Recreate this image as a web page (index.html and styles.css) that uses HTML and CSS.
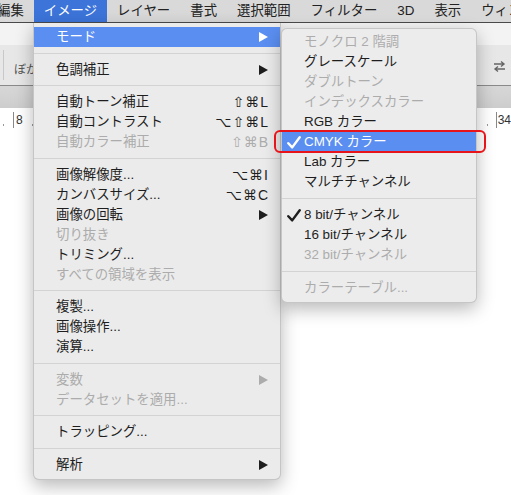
FILE: index.html
```html
<!DOCTYPE html>
<html lang="ja">
<head>
<meta charset="utf-8">
<title>Photoshop イメージメニュー</title>
<link rel="stylesheet" href="styles.css">
</head>
<body>
<div class="app">
  <div class="menubar">
    <span class="mb-item">編集</span>
    <span class="mb-item active">イメージ</span>
    <span class="mb-item">レイヤー</span>
    <span class="mb-item">書式</span>
    <span class="mb-item">選択範囲</span>
    <span class="mb-item">フィルター</span>
    <span class="mb-item">3D</span>
    <span class="mb-item">表示</span>
    <span class="mb-item">ウィンドウ</span>
  </div>
  <div class="opt-top"></div>
  <div class="opt-main">
    <span class="vsep"></span>
    <span class="opt-label">ぼかし</span>
    <span class="grow"></span>
    <svg class="swap" width="13" height="13" viewBox="0 0 13 13"><path d="M1 4H11M8 1.5L11 4L8 6.5M12 9H2M5 6.5L2 9L5 11.5" fill="none" stroke="currentColor" stroke-width="1.4"/></svg>
  </div>
  <div class="opt-line"></div>
  <div class="tabband"></div>
  <div class="ruler">
    <div class="rgroup"><span class="dot"></span><span class="tick"></span><span class="num">8</span><span class="dot dot-after"></span></div>
    <div class="rgroup"><span class="dot"></span><span class="tick"></span><span class="num">34</span></div>
  </div>
</div>

<div class="menu main-menu">
  <div class="item hl"><span class="label">モード</span><svg class="arrow" width="9" height="10" viewBox="0 0 9 10"><path d="M0 0L9 5L0 10Z" fill="currentColor"/></svg></div>
  <div class="sep"></div>
  <div class="item"><span class="label">色調補正</span><svg class="arrow" width="9" height="10" viewBox="0 0 9 10"><path d="M0 0L9 5L0 10Z" fill="currentColor"/></svg></div>
  <div class="sep"></div>
  <div class="item"><span class="label">自動トーン補正</span><span class="key">⇧⌘L</span></div>
  <div class="item"><span class="label">自動コントラスト</span><span class="key">⌥⇧⌘L</span></div>
  <div class="item dis"><span class="label">自動カラー補正</span><span class="key">⇧⌘B</span></div>
  <div class="sep"></div>
  <div class="item"><span class="label">画像解像度...</span><span class="key">⌥⌘I</span></div>
  <div class="item"><span class="label">カンバスサイズ...</span><span class="key">⌥⌘C</span></div>
  <div class="item"><span class="label">画像の回転</span><svg class="arrow" width="9" height="10" viewBox="0 0 9 10"><path d="M0 0L9 5L0 10Z" fill="currentColor"/></svg></div>
  <div class="item dis"><span class="label">切り抜き</span></div>
  <div class="item"><span class="label">トリミング...</span></div>
  <div class="item dis"><span class="label">すべての領域を表示</span></div>
  <div class="sep"></div>
  <div class="item"><span class="label">複製...</span></div>
  <div class="item"><span class="label">画像操作...</span></div>
  <div class="item"><span class="label">演算...</span></div>
  <div class="sep"></div>
  <div class="item dis"><span class="label">変数</span><svg class="arrow" width="9" height="10" viewBox="0 0 9 10"><path d="M0 0L9 5L0 10Z" fill="currentColor"/></svg></div>
  <div class="item dis"><span class="label">データセットを適用...</span></div>
  <div class="sep"></div>
  <div class="item"><span class="label">トラッピング...</span></div>
  <div class="sep"></div>
  <div class="item"><span class="label">解析</span><svg class="arrow" width="9" height="10" viewBox="0 0 9 10"><path d="M0 0L9 5L0 10Z" fill="currentColor"/></svg></div>
</div>

<div class="menu sub-menu">
  <div class="sitem dis"><span class="chk"></span><span class="label">モノクロ 2 階調</span></div>
  <div class="sitem"><span class="chk"></span><span class="label">グレースケール</span></div>
  <div class="sitem dis"><span class="chk"></span><span class="label">ダブルトーン</span></div>
  <div class="sitem dis"><span class="chk"></span><span class="label">インデックスカラー</span></div>
  <div class="sitem"><span class="chk"></span><span class="label">RGB カラー</span></div>
  <div class="sitem hl"><span class="chk"><svg width="14" height="13" viewBox="0 0 14 13"><path d="M1.3 7.2L5.2 11.4L12.7 1.3" fill="none" stroke="currentColor" stroke-width="2.4" stroke-linecap="round" stroke-linejoin="round"/></svg></span><span class="label">CMYK カラー</span></div>
  <div class="sitem"><span class="chk"></span><span class="label">Lab カラー</span></div>
  <div class="sitem"><span class="chk"></span><span class="label">マルチチャンネル</span></div>
  <div class="sep"></div>
  <div class="sitem"><span class="chk"><svg width="14" height="13" viewBox="0 0 14 13"><path d="M1.3 7.2L5.2 11.4L12.7 1.3" fill="none" stroke="currentColor" stroke-width="2.4" stroke-linecap="round" stroke-linejoin="round"/></svg></span><span class="label">8 bit/チャンネル</span></div>
  <div class="sitem"><span class="chk"></span><span class="label">16 bit/チャンネル</span></div>
  <div class="sitem dis"><span class="chk"></span><span class="label">32 bit/チャンネル</span></div>
  <div class="sep"></div>
  <div class="sitem dis"><span class="chk"></span><span class="label">カラーテーブル...</span></div>
</div>

<div class="callout"></div>
</body>
</html>
```

FILE: styles.css
```css
html, body {
  margin: 0;
  padding: 0;
}
body {
  width: 511px;
  height: 495px;
  overflow: hidden;
  position: relative;
  background: #ffffff;
  font-family: "Liberation Sans", "Noto Sans CJK JP", sans-serif;
  color: #1e1e1e;
}

/* ---------- background application ---------- */
.app {
  width: 511px;
}
.menubar {
  height: 22px;
  background: #d9d9d9;
  border-bottom: 1px solid #4a4a4a;
  display: flex;
  align-items: center;
  white-space: nowrap;
  overflow: hidden;
  font-size: 13.4px;
  color: #222;
}
.mb-item {
  flex: none;
  height: 22px;
  line-height: 22px;
  padding: 0 10px;
}
.mb-item:first-child {
  margin-left: -13px;
}
.mb-item.active {
  background: #3c74d9;
  color: #ffffff;
}
.opt-top {
  height: 22px;
  background: #f3f3f3;
}
.opt-main {
  height: 40px;
  background: #e7e7e7;
  display: flex;
  align-items: center;
}
.vsep {
  width: 1px;
  height: 30px;
  background: #c8c8c8;
  margin-left: 3px;
}
.opt-label {
  margin-left: 10px;
  margin-top: 6px;
  font-size: 12px;
  color: #555;
}
.grow {
  flex: 1;
}
.swap {
  color: #666;
  margin-right: 5px;
  margin-top: 2px;
}
.opt-line {
  height: 1px;
  background: #8a8a8a;
}
.tabband {
  height: 22px;
  background: linear-gradient(#d7d7d7, #cdcdcd);
}
.ruler {
  height: 20px;
  display: flex;
  justify-content: space-between;
  align-items: flex-end;
  font-size: 12px;
  color: #333;
}
.rgroup {
  display: flex;
  align-items: flex-end;
}
.dot {
  flex: none;
  width: 1px;
  height: 2px;
  background: #999;
  margin: 0 0 2px 3px;
}
.tick {
  flex: none;
  width: 1px;
  height: 16px;
  background: #888;
  margin-left: 9px;
  margin-right: 2px;
}
.num {
  line-height: 14px;
  margin-bottom: 1px;
}
.dot-after {
  margin-left: 9px;
}
.rgroup:last-child .tick {
  margin-left: 8px;
  margin-right: 1px;
}

/* ---------- menus ---------- */
.menu {
  position: absolute;
  box-sizing: border-box;
  background: #ebebeb;
  border: 1px solid rgba(0, 0, 0, 0.16);
  box-shadow: 0 6px 18px rgba(0, 0, 0, 0.28);
  font-size: 13.4px;
  white-space: nowrap;
}
.main-menu {
  left: 33px;
  top: 23px;
  width: 248px;
  padding: 4px 0 4px 0;
  border-top: none;
  border-radius: 0 0 6px 6px;
  z-index: 2;
}
.sub-menu {
  left: 281px;
  top: 28px;
  width: 196px;
  padding: 3px 0 4px 0;
  border-radius: 6px;
  z-index: 3;
  background: #ececec;
}
.item {
  display: flex;
  align-items: center;
  height: 20px;
  line-height: 20px;
  padding: 0 12px 0 22px;
}
.sitem {
  display: flex;
  align-items: center;
  height: 20px;
  line-height: 20px;
  padding: 0 12px 0 0;
}
.label {
  flex: 1;
}
.chk {
  flex: none;
  width: 22px;
  height: 20px;
  display: flex;
  align-items: center;
  padding-left: 5px;
  box-sizing: border-box;
}
.key {
  font-family: "Liberation Sans", "DejaVu Sans", sans-serif;
  font-size: 14px;
  letter-spacing: 1px;
  margin-right: -1px;
}
.arrow {
  flex: none;
  display: block;
}
.hl {
  background: #5a8ef0;
  color: #ffffff;
}
.dis {
  color: #acacac;
}
.main-menu .sep {
  height: 12.5px;
  display: flex;
  align-items: center;
}
.sub-menu .sep {
  height: 13px;
  display: flex;
  align-items: center;
}
.sep::before {
  content: "";
  display: block;
  width: 100%;
  height: 1px;
  background: #d3d3d3;
}

/* ---------- annotation ---------- */
.callout {
  position: absolute;
  left: 274px;
  top: 130px;
  width: 212px;
  height: 23px;
  box-sizing: border-box;
  border: 2.5px solid #e8141b;
  border-radius: 6px;
  z-index: 4;
}
```
